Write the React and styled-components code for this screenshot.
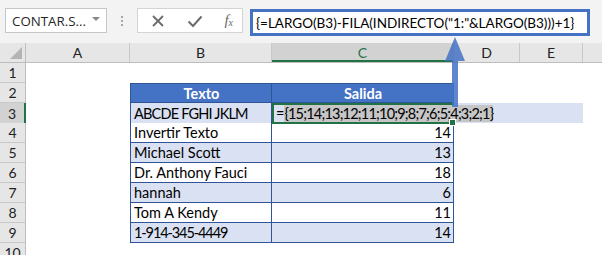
import React from "react";
import styled, { createGlobalStyle } from "styled-components";

const COLS = "26px 104px 142px 182px 66px 63px 1fr";

// track = letter-spacing to bring Lato caps/digits closer to the Calibri widths
const rows = [
  { n: 1 },
  { n: 2, b: "Texto", c: "Salida", head: true },
  { n: 3, b: "ABCDE FGHI JKLM", track: -0.8, formula: true, shade: true },
  { n: 4, b: "Invertir Texto", c: "14" },
  { n: 5, b: "Michael Scott", c: "13", shade: true },
  { n: 6, b: "Dr. Anthony Fauci", c: "18" },
  { n: 7, b: "hannah", c: "6", shade: true },
  { n: 8, b: "Tom A Kendy", c: "11" },
  { n: 9, b: "1-914-345-4449", track: -1.1, c: "14", shade: true },
  { n: 10 },
];

const App = () => {
  return (
    <>
      <GlobalStyle />
      <Window>
        <Toolbar>
          <NameBox>
            <span>CONTAR.S...</span>
            <Caret />
          </NameBox>
          <Grip>
            <i />
            <i />
            <i />
          </Grip>
          <IconBox>
            <svg width="14" height="14" viewBox="0 0 14 14">
              <path d="M2 2 L12 12 M12 2 L2 12" stroke="#6b6b6b" strokeWidth="1.8" />
            </svg>
            <svg width="16" height="14" viewBox="0 0 16 14">
              <path d="M1.5 7.5 L6 12 L14.5 2.5" stroke="#6b6b6b" strokeWidth="2" fill="none" />
            </svg>
            <Fx>
              f<sub>x</sub>
            </Fx>
          </IconBox>
          <FormulaBox>{'{=LARGO(B3)-FILA(INDIRECTO("1:"&LARGO(B3)))+1}'}</FormulaBox>
        </Toolbar>

        <Sheet>
          <HeadRow>
            <Corner>
              <svg width="14" height="14" viewBox="0 0 14 14">
                <path d="M13 1 L13 13 L1 13 Z" fill="#b4b4b4" />
              </svg>
            </Corner>
            <ColHead>A</ColHead>
            <ColHead>B</ColHead>
            <ColHead $active>C</ColHead>
            <ColHead>D</ColHead>
            <ColHead>E</ColHead>
            <ColHead $last />
          </HeadRow>

          {rows.map((r) => (
            <Row key={r.n} $shade={r.formula}>
              <RowHead $active={r.n === 3}>{r.n}</RowHead>
              <Cell />
              {r.b ? (
                <TableCell $head={r.head} $shade={r.shade} $track={r.track} $left>
                  {r.b}
                </TableCell>
              ) : (
                <Cell />
              )}
              {r.formula ? (
                <ActiveCell>
                  =<Selected>{"{15;14;13;12;11;10;9;8;7;6;5;4;3;2;1}"}</Selected>
                  <Handle />
                </ActiveCell>
              ) : r.b ? (
                <TableCell $head={r.head} $shade={r.shade} $num={!r.head}>
                  {r.c}
                </TableCell>
              ) : (
                <Cell />
              )}
              <Cell />
              <Cell />
              <Cell />
            </Row>
          ))}

          <Arrow width="24" height="72" viewBox="0 0 24 72">
            <path d="M12 0 L22 24 L15 24 L15 70 L9 70 L9 24 L2 24 Z" fill="#4472c4" opacity="0.85" />
          </Arrow>
        </Sheet>
      </Window>
    </>
  );
};

export default App;

const GlobalStyle = createGlobalStyle`
  html, body {
    margin: 0;
    padding: 0;
    background: #ffffff;
  }
  body {
    font-family: Lato, "Liberation Sans", sans-serif;
  }
`;

const Window = styled.div`
  width: 602px;
  height: 255px;
  overflow: hidden;
  background: #ffffff;
`;

const Toolbar = styled.div`
  height: 43px;
  box-sizing: border-box;
  background: #f3f3f3;
  display: flex;
  align-items: flex-start;
  padding: 8px 0 0 5px;
`;

const NameBox = styled.div`
  width: 102px;
  height: 25px;
  box-sizing: border-box;
  background: #fff;
  border: 1px solid #c6c6c6;
  display: flex;
  align-items: center;
  justify-content: space-between;
  padding: 0 6px 0 6px;
  font-family: "Open Sans", sans-serif;
  font-size: 13.3px;
  color: #262626;
`;

const Caret = styled.span`
  width: 0;
  height: 0;
  border-left: 4px solid transparent;
  border-right: 4px solid transparent;
  border-top: 4px solid #8a8a8a;
  margin-bottom: 3px;
`;

const Grip = styled.div`
  width: 30px;
  height: 25px;
  display: flex;
  flex-direction: column;
  align-items: center;
  justify-content: center;
  gap: 2px;

  i {
    width: 2px;
    height: 2px;
    background: #a6a6a6;
  }
`;

const IconBox = styled.div`
  width: 106px;
  height: 25px;
  box-sizing: border-box;
  background: #fff;
  border: 1px solid #d4d4d4;
  display: flex;
  align-items: center;
  justify-content: space-between;
  padding: 0 9px 0 13px;
  margin-right: 7px;
`;

const Fx = styled.span`
  font-family: "Liberation Serif", serif;
  font-style: italic;
  font-size: 15px;
  color: #6b6b6b;
  line-height: 1;

  sub {
    font-size: 10px;
    vertical-align: -1px;
  }
`;

const FormulaBox = styled.div`
  width: 340px;
  height: 27px;
  box-sizing: border-box;
  margin-top: 1px;
  border: 3px solid #4472c4;
  background: #fff;
  display: flex;
  align-items: center;
  padding-left: 3px;
  font-family: Lato, sans-serif;
  font-size: 13.5px;
  color: #000;
  white-space: nowrap;
`;

const Sheet = styled.div`
  position: relative;
`;

const HeadRow = styled.div`
  display: grid;
  grid-template-columns: ${COLS};
  height: 20px;
  background: #e6e6e6;
  border-bottom: 1px solid #bdbdbd;
  box-sizing: border-box;
`;

const Corner = styled.div`
  display: flex;
  align-items: flex-end;
  justify-content: flex-end;
  padding: 0 2px 2px 0;
  border-right: 1px solid #bdbdbd;
`;

const ColHead = styled.div`
  display: flex;
  align-items: center;
  justify-content: center;
  font-size: 14px;
  color: ${(p) => (p.$active ? "#217346" : "#222")};
  background: ${(p) => (p.$active ? "#d2d2d2" : "transparent")};
  border-right: ${(p) => (p.$last ? "none" : "1px solid #c8c8c8")};
  box-shadow: ${(p) => (p.$active ? "inset 0 -2px 0 #217346" : "none")};
`;

const Row = styled.div`
  display: grid;
  grid-template-columns: ${COLS};
  height: 20px;
  background: ${(p) =>
    p.$shade
      ? "linear-gradient(90deg, transparent 130px, #d9e1f2 130px, #d9e1f2 583px, transparent 583px)"
      : "transparent"};
`;

const RowHead = styled.div`
  display: flex;
  align-items: center;
  justify-content: center;
  box-sizing: border-box;
  font-size: 14px;
  color: #222;
  background: ${(p) => (p.$active ? "#d2d2d2" : "#e6e6e6")};
  border-bottom: 1px solid #c8c8c8;
  border-right: ${(p) => (p.$active ? "2px solid #217346" : "1px solid #bdbdbd")};
`;

const Cell = styled.div``;

const TableCell = styled.div`
  box-sizing: border-box;
  display: flex;
  align-items: center;
  justify-content: ${(p) => (p.$head ? "center" : p.$num ? "flex-end" : "flex-start")};
  padding: 0 2px 0 3px;
  font-size: 14.5px;
  letter-spacing: ${(p) => (p.$track ? `${p.$track}px` : "normal")};
  font-weight: ${(p) => (p.$head ? 700 : 400)};
  color: ${(p) => (p.$head ? "#fff" : "#000")};
  background: ${(p) => (p.$head ? "#4472c4" : p.$shade ? "#d9e1f2" : "#fff")};
  border-right: 1px solid #2f5597;
  border-bottom: 1px solid #2f5597;
  border-left: ${(p) => (p.$left ? "1px solid #2f5597" : "none")};
  border-top: ${(p) => (p.$head ? "1px solid #2f5597" : "none")};
  white-space: nowrap;
`;

const ActiveCell = styled.div`
  position: relative;
  box-sizing: border-box;
  display: flex;
  align-items: center;
  padding-left: 2px;
  font-size: 14.5px;
  color: #000;
  border: 2px solid #217346;
  white-space: nowrap;
  overflow: visible;
  z-index: 1;
`;

const Selected = styled.span`
  background: #c6c6c6;
  line-height: 17px;
  letter-spacing: -0.8px;
`;

const Handle = styled.span`
  position: absolute;
  right: -4px;
  bottom: -4px;
  width: 5px;
  height: 5px;
  background: #217346;
  border: 1px solid #fff;
`;

const Arrow = styled.svg`
  position: absolute;
  left: 443px;
  top: -6px;
  z-index: 2;
`;
